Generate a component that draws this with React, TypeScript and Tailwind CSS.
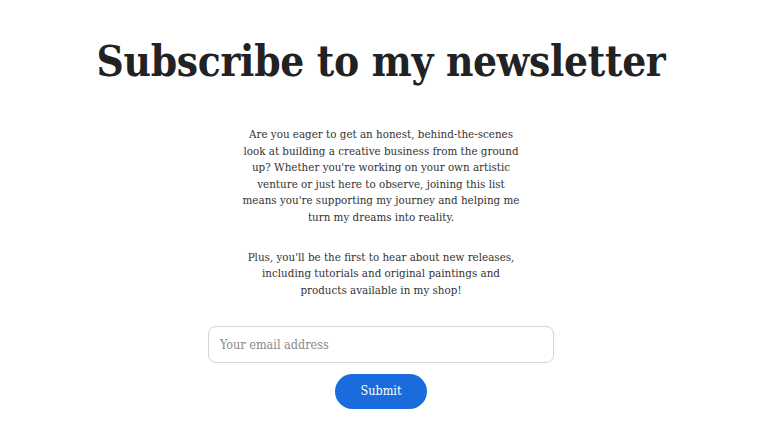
export default function App() {
  return (
    <div
      className="w-[768px] h-[421px] pr-[6px] bg-white flex flex-col items-center text-[#222]"
      style={{ fontFamily: '"DejaVu Serif", "Liberation Serif", serif' }}
    >
      <h1 className="mt-[34px] text-[42px] leading-[56px] font-bold tracking-[-0.3px] [font-stretch:condensed]">
        Subscribe to my newsletter
      </h1>

      <div className="mt-[36px] text-[11.5px] leading-[16.6px] text-center text-[#333] [font-stretch:condensed]">
        <p>
          Are you eager to get an honest, behind-the-scenes
          <br />
          look at building a creative business from the ground
          <br />
          up? Whether you're working on your own artistic
          <br />
          venture or just here to observe, joining this list
          <br />
          means you're supporting my journey and helping me
          <br />
          turn my dreams into reality.
        </p>
        <p className="mt-[23px]">
          Plus, you'll be the first to hear about new releases,
          <br />
          including tutorials and original paintings and
          <br />
          products available in my shop!
        </p>
      </div>

      <form className="mt-[28px] flex flex-col items-center gap-[11px]" onSubmit={(e) => e.preventDefault()}>
        <input
          type="email"
          placeholder="Your email address"
          className="w-[346px] h-[37px] px-[11px] rounded-[8px] border border-[#d4d4d4] text-[12.5px] placeholder:text-[#8a8a8a] outline-none [font-stretch:condensed]"
        />
        <button
          type="submit"
          className="w-[92px] h-[35px] rounded-full bg-[#1a6bdc] text-white text-[12.5px] [font-stretch:condensed]"
        >
          Submit
        </button>
      </form>
    </div>
  )
}
